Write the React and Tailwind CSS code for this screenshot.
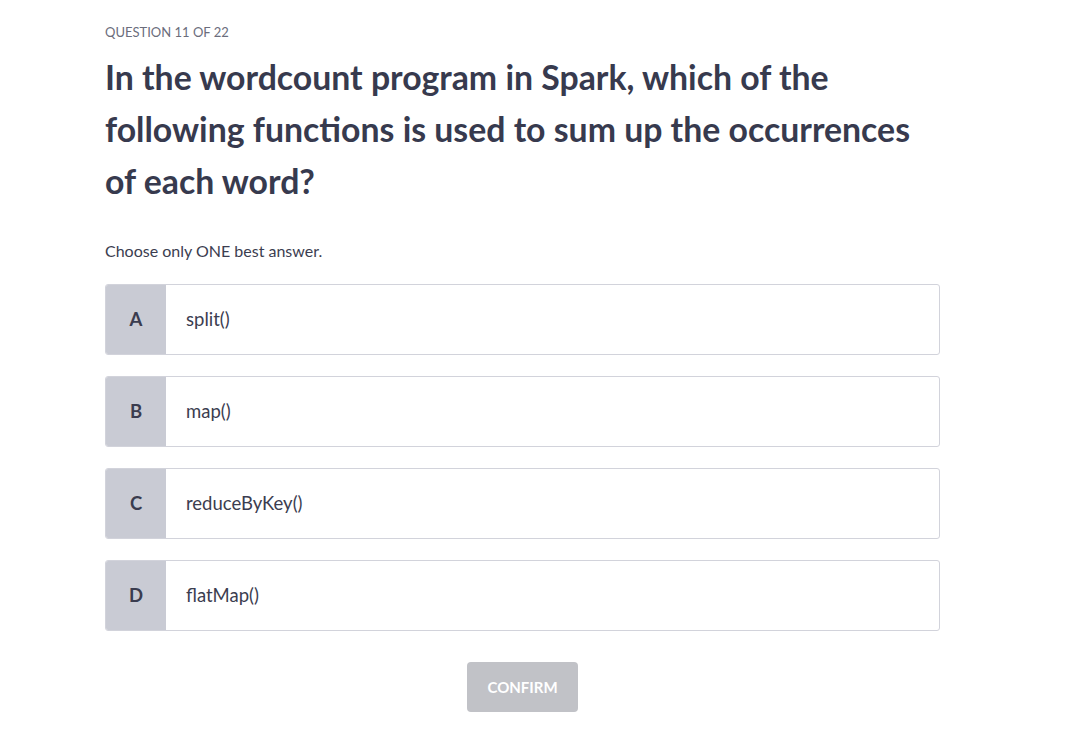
import React from "react";

const options = [
  { letter: "A", text: "split()" },
  { letter: "B", text: "map()" },
  { letter: "C", text: "reduceByKey()" },
  { letter: "D", text: "flatMap()" },
];

export default function App() {
  return (
    <div
      className="min-h-[732px] w-full bg-white text-[#3b3d50]"
      style={{ fontFamily: "Lato, 'Noto Sans', sans-serif" }}
    >
      <div className="w-[835px] ml-[105px] pt-[24px]">
        <div className="text-[13px] leading-[16px] text-[#6b6d7c] uppercase">
          Question 11 of 22
        </div>
        <h1 className="mt-[11px] text-[33.8px] leading-[52px] font-bold text-[#373a4e]">
          In the wordcount program in Spark, which of the
          <br />
          following functions is used to sum up the occurrences
          <br />
          of each word?
        </h1>
        <p className="mt-[34px] text-[16px] leading-[20px] text-[#3b3d50]">
          Choose only ONE best answer.
        </p>
        <div className="mt-[23px] flex flex-col gap-[21px]">
          {options.map((o) => (
            <div
              key={o.letter}
              className="flex h-[71px] rounded-[3px] border border-[#d2d3db] bg-white overflow-hidden"
            >
              <div className="w-[60px] flex items-center justify-center bg-[#c9cbd4] text-[18.5px] font-bold text-[#3a3c4f]">
                {o.letter}
              </div>
              <div className="flex items-center pl-[20px] text-[18.5px] text-[#3b3d50]">
                {o.text}
              </div>
            </div>
          ))}
        </div>
        <div className="mt-[31px] flex justify-center">
          <button className="w-[111px] h-[50px] rounded-[4px] bg-[#c1c2c7] text-white text-[15px] font-bold uppercase">
            Confirm
          </button>
        </div>
      </div>
    </div>
  );
}
